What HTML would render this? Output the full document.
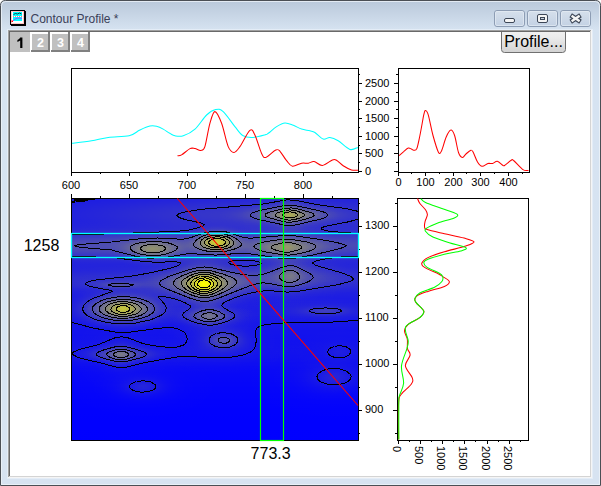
<!DOCTYPE html>
<html><head><meta charset="utf-8"><style>
html,body{margin:0;padding:0;background:#fff;width:601px;height:486px;overflow:hidden}
svg{display:block}
</style></head><body>
<svg width="601" height="486" viewBox="0 0 601 486">

<defs>
 <linearGradient id="frameg" gradientUnits="userSpaceOnUse" x1="0" y1="0" x2="0" y2="486">
  <stop offset="0" stop-color="#b9c8da"/>
  <stop offset="0.062" stop-color="#d6e3f1"/>
  <stop offset="1" stop-color="#d7e3f1"/>
 </linearGradient>
 <linearGradient id="btng" x1="0" y1="0" x2="0" y2="1">
  <stop offset="0" stop-color="#d6e0ec"/>
  <stop offset="1" stop-color="#c3d1e3"/>
 </linearGradient>
 <linearGradient id="profg" x1="0" y1="0" x2="0" y2="1">
  <stop offset="0" stop-color="#f6f6f6"/>
  <stop offset="0.45" stop-color="#ebebeb"/>
  <stop offset="1" stop-color="#d2d2d2"/>
 </linearGradient>
 <clipPath id="clientclip"><rect x="10" y="32" width="580" height="444"/></clipPath>
 <clipPath id="mpclip"><rect x="72" y="199" width="286" height="241"/></clipPath>
</defs>
<path d="M0.5 485.5 V5.5 Q0.5 0.5 5.5 0.5 H595.5 Q600.5 0.5 600.5 5.5 V485.5 Z" fill="url(#frameg)" stroke="#4b4f55" stroke-width="1"/>
<path d="M1.5 484.5 V5.5 Q1.5 1.5 5.5 1.5 H595.5 Q599.5 1.5 599.5 5.5 V484.5 Z" fill="none" stroke="#eef3f9" stroke-opacity="0.8" stroke-width="1"/>
<rect x="7" y="29" width="586" height="450" fill="#e4edf7"/>
<rect x="8" y="30" width="584" height="448" fill="#f5f5f5"/>
<rect x="8" y="30" width="583" height="447" fill="#a0a0a0"/>
<rect x="9" y="31" width="582" height="446" fill="#d4d4d4"/>
<rect x="9" y="31" width="581" height="445" fill="#696969"/>
<rect x="10" y="32" width="580" height="444" fill="#ffffff"/>


<g>
 <rect x="11" y="11" width="15" height="15" fill="#000"/>
 <rect x="10" y="10" width="15" height="15" fill="#000"/>
 <rect x="11" y="11" width="13" height="13" fill="#fff"/>
 <rect x="11.5" y="11.5" width="12" height="12" fill="none" stroke="#ff7070" stroke-width="0.8" stroke-dasharray="1 1"/>
 <rect x="13" y="12" width="9" height="4" fill="#00ffff"/>
 <rect x="13" y="17" width="9" height="4" fill="#00ffff"/>
 <path d="M13.5 14.5 l2 -1 l2 0.5 l2 -1 l2 1" stroke="#103030" stroke-width="0.9" fill="none"/>
 <path d="M13 21 l2 -2 l3 -1 l4 0.5" stroke="#a040ff" stroke-width="0.9" fill="none"/>
 <path d="M13 16.5 h9" stroke="#ff4040" stroke-width="0.7" stroke-dasharray="1 1"/>
 <rect x="11.5" y="20.5" width="1.5" height="1.5" fill="#ff0000"/>
</g>

<text x="30.5" y="23" font-family="'Liberation Sans', sans-serif" font-size="12" fill="#3a4058">Contour Profile *</text>
<rect x="494.5" y="10.5" width="30" height="16" rx="2.5" ry="2.5" fill="url(#btng)" stroke="#8d9db4" stroke-width="1"/><rect x="495.5" y="11.5" width="28" height="14" rx="1.5" fill="none" stroke="#e4ebf4" stroke-opacity="0.7"/>
<rect x="527.5" y="10.5" width="30" height="16" rx="2.5" ry="2.5" fill="url(#btng)" stroke="#8d9db4" stroke-width="1"/><rect x="528.5" y="11.5" width="28" height="14" rx="1.5" fill="none" stroke="#e4ebf4" stroke-opacity="0.7"/>
<rect x="560.5" y="10.5" width="30" height="16" rx="2.5" ry="2.5" fill="url(#btng)" stroke="#8d9db4" stroke-width="1"/><rect x="561.5" y="11.5" width="28" height="14" rx="1.5" fill="none" stroke="#e4ebf4" stroke-opacity="0.7"/>
<rect x="504.5" y="18.5" width="10" height="4" rx="1.5" fill="#f4f4f4" stroke="#3c4656" stroke-width="1"/>
<rect x="537.5" y="14.5" width="10" height="8" rx="1.5" fill="#f4f4f4" stroke="#3c4656" stroke-width="1"/><rect x="540.5" y="17.5" width="4" height="2" fill="#c8d0dc" stroke="#3c4656" stroke-width="1"/>
<path d="M572.6 16.5 L578.6 20.5 M578.6 16.5 L572.6 20.5" stroke="#3c4656" stroke-width="4.6" stroke-linecap="square"/><path d="M572.6 16.5 L578.6 20.5 M578.6 16.5 L572.6 20.5" stroke="#f4f4f4" stroke-width="2.4" stroke-linecap="square"/>
<rect x="10" y="32" width="20" height="20" fill="#c0c0c0"/>
<path d="M20.2 37.6 H22.4 V47.9 H20.2 V40.6 Q19 41.6 17.4 42 V39.9 Q19.4 39.2 20.2 37.6 Z" fill="#000"/>
<rect x="31" y="32" width="19" height="20" fill="#808080"/><rect x="31" y="32" width="17" height="18" fill="#ffffff"/><rect x="32" y="34" width="16" height="16" fill="#c0c0c0"/>
<text x="40.5" y="47" text-anchor="middle" font-family="'Liberation Sans', sans-serif" font-weight="bold" font-size="12.5" fill="#ffffff">2</text>
<rect x="51" y="32" width="19" height="20" fill="#808080"/><rect x="51" y="32" width="17" height="18" fill="#ffffff"/><rect x="52" y="34" width="16" height="16" fill="#c0c0c0"/>
<text x="60.5" y="47" text-anchor="middle" font-family="'Liberation Sans', sans-serif" font-weight="bold" font-size="12.5" fill="#ffffff">3</text>
<rect x="71" y="32" width="19" height="20" fill="#808080"/><rect x="71" y="32" width="17" height="18" fill="#ffffff"/><rect x="72" y="34" width="16" height="16" fill="#c0c0c0"/>
<text x="80.5" y="47" text-anchor="middle" font-family="'Liberation Sans', sans-serif" font-weight="bold" font-size="12.5" fill="#ffffff">4</text>
<g clip-path="url(#clientclip)"><rect x="501.5" y="25.5" width="64" height="27" rx="3" ry="3" fill="url(#profg)" stroke="#707070" stroke-width="1"/>
<text x="533.5" y="46.5" text-anchor="middle" font-family="'Liberation Sans', sans-serif" font-size="16" fill="#000">Profile...</text></g>
<text x="71.0" y="189" font-family="'Liberation Sans', sans-serif" font-size="11" text-anchor="middle" >600</text>
<text x="129.0" y="189" font-family="'Liberation Sans', sans-serif" font-size="11" text-anchor="middle" >650</text>
<text x="187.0" y="189" font-family="'Liberation Sans', sans-serif" font-size="11" text-anchor="middle" >700</text>
<text x="245.0" y="189" font-family="'Liberation Sans', sans-serif" font-size="11" text-anchor="middle" >750</text>
<text x="303.0" y="189" font-family="'Liberation Sans', sans-serif" font-size="11" text-anchor="middle" >800</text>
<text x="365" y="174.5" font-family="'Liberation Sans', sans-serif" font-size="11" text-anchor="start" >0</text>
<text x="365" y="156.5" font-family="'Liberation Sans', sans-serif" font-size="11" text-anchor="start" >500</text>
<text x="365" y="139.5" font-family="'Liberation Sans', sans-serif" font-size="11" text-anchor="start" >1000</text>
<text x="365" y="121.5" font-family="'Liberation Sans', sans-serif" font-size="11" text-anchor="start" >1500</text>
<text x="365" y="104.5" font-family="'Liberation Sans', sans-serif" font-size="11" text-anchor="start" >2000</text>
<text x="365" y="86.5" font-family="'Liberation Sans', sans-serif" font-size="11" text-anchor="start" >2500</text>
<text x="398.5" y="186" font-family="'Liberation Sans', sans-serif" font-size="11" text-anchor="middle" >0</text>
<text x="425.5" y="186" font-family="'Liberation Sans', sans-serif" font-size="11" text-anchor="middle" >100</text>
<text x="453.5" y="186" font-family="'Liberation Sans', sans-serif" font-size="11" text-anchor="middle" >200</text>
<text x="480.5" y="186" font-family="'Liberation Sans', sans-serif" font-size="11" text-anchor="middle" >300</text>
<text x="508.5" y="186" font-family="'Liberation Sans', sans-serif" font-size="11" text-anchor="middle" >400</text>
<text x="365" y="413.3" font-family="'Liberation Sans', sans-serif" font-size="11" text-anchor="start" >900</text>
<text x="365" y="367.3" font-family="'Liberation Sans', sans-serif" font-size="11" text-anchor="start" >1000</text>
<text x="365" y="321.3" font-family="'Liberation Sans', sans-serif" font-size="11" text-anchor="start" >1100</text>
<text x="365" y="275.3" font-family="'Liberation Sans', sans-serif" font-size="11" text-anchor="start" >1200</text>
<text x="365" y="229.3" font-family="'Liberation Sans', sans-serif" font-size="11" text-anchor="start" >1300</text>
<text transform="translate(393.0,446) rotate(90)" font-family="'Liberation Sans', sans-serif" font-size="11">0</text>
<text transform="translate(415.0,446) rotate(90)" font-family="'Liberation Sans', sans-serif" font-size="11">500</text>
<text transform="translate(437.0,446) rotate(90)" font-family="'Liberation Sans', sans-serif" font-size="11">1000</text>
<text transform="translate(459.0,446) rotate(90)" font-family="'Liberation Sans', sans-serif" font-size="11">1500</text>
<text transform="translate(482.0,446) rotate(90)" font-family="'Liberation Sans', sans-serif" font-size="11">2000</text>
<text transform="translate(504.0,446) rotate(90)" font-family="'Liberation Sans', sans-serif" font-size="11">2500</text>
<path d="M71.5 172 v4 M71.5 198 v-4 M100.5 172 v2 M100.5 198 v-2 M129.5 172 v4 M129.5 198 v-4 M158.5 172 v2 M158.5 198 v-2 M187.5 172 v4 M187.5 198 v-4 M216.5 172 v2 M216.5 198 v-2 M245.5 172 v4 M245.5 198 v-4 M274.5 172 v2 M274.5 198 v-2 M303.5 172 v4 M303.5 198 v-4 M332.5 172 v2 M332.5 198 v-2 M358 171.5 h4 M398 171.5 h-4 M358 162.5 h2 M398 162.5 h-2 M358 153.5 h4 M398 153.5 h-4 M358 145.5 h2 M398 145.5 h-2 M358 136.5 h4 M398 136.5 h-4 M358 127.5 h2 M398 127.5 h-2 M358 118.5 h4 M398 118.5 h-4 M358 109.5 h2 M398 109.5 h-2 M358 101.5 h4 M398 101.5 h-4 M358 92.5 h2 M398 92.5 h-2 M358 83.5 h4 M398 83.5 h-4 M358 74.5 h2 M398 74.5 h-2 M398.5 172 v4 M411.5 172 v2 M425.5 172 v4 M439.5 172 v2 M453.5 172 v4 M466.5 172 v2 M480.5 172 v4 M494.5 172 v2 M508.5 172 v4 M522.5 172 v2 M358 433.5 h2 M397 433.5 h-2 M358 410.5 h4 M397 410.5 h-4 M358 387.5 h2 M397 387.5 h-2 M358 364.5 h4 M397 364.5 h-4 M358 341.5 h2 M397 341.5 h-2 M358 318.5 h4 M397 318.5 h-4 M358 295.5 h2 M397 295.5 h-2 M358 272.5 h4 M397 272.5 h-4 M358 249.5 h2 M397 249.5 h-2 M358 226.5 h4 M397 226.5 h-4 M358 203.5 h2 M397 203.5 h-2 M398.5 440 v4 M409.5 440 v2 M420.5 440 v4 M431.5 440 v2 M442.5 440 v4 M453.5 440 v2 M464.5 440 v4 M475.5 440 v2 M487.5 440 v4 M498.5 440 v2 M509.5 440 v4 M520.5 440 v2" stroke="#000" stroke-width="1" fill="none"/>
<defs><radialGradient id="lor"><stop offset="0.0000" stop-color="#fff" stop-opacity="1.0000"/><stop offset="0.0417" stop-color="#fff" stop-opacity="0.9503"/><stop offset="0.0833" stop-color="#fff" stop-opacity="0.8220"/><stop offset="0.1250" stop-color="#fff" stop-opacity="0.6603"/><stop offset="0.1667" stop-color="#fff" stop-opacity="0.5046"/><stop offset="0.2083" stop-color="#fff" stop-opacity="0.3750"/><stop offset="0.2500" stop-color="#fff" stop-opacity="0.2754"/><stop offset="0.2917" stop-color="#fff" stop-opacity="0.2023"/><stop offset="0.3333" stop-color="#fff" stop-opacity="0.1495"/><stop offset="0.3750" stop-color="#fff" stop-opacity="0.1115"/><stop offset="0.4167" stop-color="#fff" stop-opacity="0.0842"/><stop offset="0.4583" stop-color="#fff" stop-opacity="0.0644"/><stop offset="0.5000" stop-color="#fff" stop-opacity="0.0498"/><stop offset="0.5417" stop-color="#fff" stop-opacity="0.0389"/><stop offset="0.5833" stop-color="#fff" stop-opacity="0.0307"/><stop offset="0.6250" stop-color="#fff" stop-opacity="0.0243"/><stop offset="0.6667" stop-color="#fff" stop-opacity="0.0194"/><stop offset="0.7083" stop-color="#fff" stop-opacity="0.0154"/><stop offset="0.7500" stop-color="#fff" stop-opacity="0.0122"/><stop offset="0.7917" stop-color="#fff" stop-opacity="0.0095"/><stop offset="0.8333" stop-color="#fff" stop-opacity="0.0072"/><stop offset="0.8750" stop-color="#fff" stop-opacity="0.0052"/><stop offset="0.9167" stop-color="#fff" stop-opacity="0.0033"/><stop offset="0.9583" stop-color="#fff" stop-opacity="0.0016"/><stop offset="1.0000" stop-color="#fff" stop-opacity="0.0000"/></radialGradient><radialGradient id="gau"><stop offset="0.0000" stop-color="#fff" stop-opacity="1.0000"/><stop offset="0.0833" stop-color="#fff" stop-opacity="0.9692"/><stop offset="0.1667" stop-color="#fff" stop-opacity="0.8825"/><stop offset="0.2500" stop-color="#fff" stop-opacity="0.7548"/><stop offset="0.3333" stop-color="#fff" stop-opacity="0.6064"/><stop offset="0.4167" stop-color="#fff" stop-opacity="0.4575"/><stop offset="0.5000" stop-color="#fff" stop-opacity="0.3240"/><stop offset="0.5833" stop-color="#fff" stop-opacity="0.2150"/><stop offset="0.6667" stop-color="#fff" stop-opacity="0.1331"/><stop offset="0.7500" stop-color="#fff" stop-opacity="0.0760"/><stop offset="0.8333" stop-color="#fff" stop-opacity="0.0386"/><stop offset="0.9167" stop-color="#fff" stop-opacity="0.0150"/><stop offset="1.0000" stop-color="#fff" stop-opacity="0.0000"/></radialGradient><linearGradient id="bgg" x1="0" y1="0" x2="0" y2="1"><stop offset="0.0000" stop-color="#fff" stop-opacity="0.0955"/><stop offset="0.0312" stop-color="#fff" stop-opacity="0.0955"/><stop offset="0.0625" stop-color="#fff" stop-opacity="0.0955"/><stop offset="0.0938" stop-color="#fff" stop-opacity="0.0954"/><stop offset="0.1250" stop-color="#fff" stop-opacity="0.0954"/><stop offset="0.1562" stop-color="#fff" stop-opacity="0.0953"/><stop offset="0.1875" stop-color="#fff" stop-opacity="0.0951"/><stop offset="0.2188" stop-color="#fff" stop-opacity="0.0949"/><stop offset="0.2500" stop-color="#fff" stop-opacity="0.0947"/><stop offset="0.2812" stop-color="#fff" stop-opacity="0.0943"/><stop offset="0.3125" stop-color="#fff" stop-opacity="0.0938"/><stop offset="0.3438" stop-color="#fff" stop-opacity="0.0930"/><stop offset="0.3750" stop-color="#fff" stop-opacity="0.0920"/><stop offset="0.4062" stop-color="#fff" stop-opacity="0.0906"/><stop offset="0.4375" stop-color="#fff" stop-opacity="0.0887"/><stop offset="0.4688" stop-color="#fff" stop-opacity="0.0861"/><stop offset="0.5000" stop-color="#fff" stop-opacity="0.0827"/><stop offset="0.5312" stop-color="#fff" stop-opacity="0.0784"/><stop offset="0.5625" stop-color="#fff" stop-opacity="0.0729"/><stop offset="0.5938" stop-color="#fff" stop-opacity="0.0664"/><stop offset="0.6250" stop-color="#fff" stop-opacity="0.0590"/><stop offset="0.6562" stop-color="#fff" stop-opacity="0.0509"/><stop offset="0.6875" stop-color="#fff" stop-opacity="0.0427"/><stop offset="0.7188" stop-color="#fff" stop-opacity="0.0347"/><stop offset="0.7500" stop-color="#fff" stop-opacity="0.0275"/><stop offset="0.7812" stop-color="#fff" stop-opacity="0.0212"/><stop offset="0.8125" stop-color="#fff" stop-opacity="0.0161"/><stop offset="0.8438" stop-color="#fff" stop-opacity="0.0120"/><stop offset="0.8750" stop-color="#fff" stop-opacity="0.0088"/><stop offset="0.9062" stop-color="#fff" stop-opacity="0.0064"/><stop offset="0.9375" stop-color="#fff" stop-opacity="0.0046"/><stop offset="0.9688" stop-color="#fff" stop-opacity="0.0033"/><stop offset="1.0000" stop-color="#fff" stop-opacity="0.0024"/></linearGradient><filter id="cmap" filterUnits="userSpaceOnUse" x="72" y="199" width="286" height="241" color-interpolation-filters="sRGB"><feColorMatrix type="matrix" values="1 0 0 0 0  1 0 0 0 0  -1 0 0 0 1  0 0 0 0 1"/></filter></defs>
<g clip-path="url(#mpclip)"><g filter="url(#cmap)" style="isolation:isolate">
<rect x="72" y="199" width="286" height="241" fill="#000"/>
<rect x="72" y="199" width="286" height="241" fill="url(#bgg)" style="mix-blend-mode:plus-lighter"/>
<ellipse cx="270" cy="215" rx="394.8" ry="36.2" fill="url(#gau)" fill-opacity="0.131" style="mix-blend-mode:plus-lighter"/>
<ellipse cx="200" cy="246" rx="750.0" ry="26.7" fill="url(#gau)" fill-opacity="0.230" style="mix-blend-mode:plus-lighter"/>
<ellipse cx="220" cy="280" rx="580.4" ry="28.4" fill="url(#gau)" fill-opacity="0.111" style="mix-blend-mode:plus-lighter"/>
<ellipse cx="190" cy="311" rx="469.2" ry="27.3" fill="url(#gau)" fill-opacity="0.025" style="mix-blend-mode:plus-lighter"/>
<ellipse cx="140" cy="354" rx="289.8" ry="22.3" fill="url(#gau)" fill-opacity="0.043" style="mix-blend-mode:plus-lighter"/>
<ellipse cx="204" cy="284.4" rx="82.5" ry="24.0" fill="url(#gau)" fill-opacity="0.281" style="mix-blend-mode:plus-lighter"/>
<ellipse cx="217" cy="241.6" rx="34.7" ry="17.2" fill="url(#gau)" fill-opacity="0.491" style="mix-blend-mode:plus-lighter"/>
<ellipse cx="123" cy="309" rx="64.2" ry="24.0" fill="url(#gau)" fill-opacity="0.528" style="mix-blend-mode:plus-lighter"/>
<ellipse cx="290" cy="215" rx="73.0" ry="13.2" fill="url(#gau)" fill-opacity="0.263" style="mix-blend-mode:plus-lighter"/>
<ellipse cx="287" cy="248" rx="64.0" ry="19.5" fill="url(#gau)" fill-opacity="0.223" style="mix-blend-mode:plus-lighter"/>
<ellipse cx="152.5" cy="250" rx="46.0" ry="18.1" fill="url(#gau)" fill-opacity="0.264" style="mix-blend-mode:plus-lighter"/>
<ellipse cx="290" cy="275.5" rx="100.0" ry="24.0" fill="url(#gau)" fill-opacity="0.115" style="mix-blend-mode:plus-lighter"/>
<ellipse cx="121" cy="354.6" rx="58.4" ry="11.7" fill="url(#gau)" fill-opacity="0.200" style="mix-blend-mode:plus-lighter"/>
<ellipse cx="209.5" cy="316.3" rx="48.7" ry="13.0" fill="url(#gau)" fill-opacity="0.219" style="mix-blend-mode:plus-lighter"/>
<ellipse cx="204" cy="284.4" rx="76.2" ry="64.1" fill="url(#lor)" fill-opacity="0.521" style="mix-blend-mode:plus-lighter"/>
<ellipse cx="123" cy="309" rx="48.6" ry="32.8" fill="url(#lor)" fill-opacity="0.144" style="mix-blend-mode:plus-lighter"/>
<ellipse cx="290" cy="215" rx="61.3" ry="57.2" fill="url(#lor)" fill-opacity="0.186" style="mix-blend-mode:plus-lighter"/>
<ellipse cx="287" cy="248" rx="26.1" ry="35.8" fill="url(#lor)" fill-opacity="0.049" style="mix-blend-mode:plus-lighter"/>
<ellipse cx="290" cy="275.5" rx="63.5" ry="60.9" fill="url(#lor)" fill-opacity="0.178" style="mix-blend-mode:plus-lighter"/>
<ellipse cx="121" cy="354.6" rx="59.3" ry="48.0" fill="url(#lor)" fill-opacity="0.185" style="mix-blend-mode:plus-lighter"/>
<ellipse cx="209.5" cy="316.3" rx="59.2" ry="54.7" fill="url(#lor)" fill-opacity="0.105" style="mix-blend-mode:plus-lighter"/>
<ellipse cx="224" cy="340.4" rx="80.2" ry="40.0" fill="url(#lor)" fill-opacity="0.254" style="mix-blend-mode:plus-lighter"/>
<ellipse cx="143" cy="387" rx="98.5" ry="41.7" fill="url(#lor)" fill-opacity="0.121" style="mix-blend-mode:plus-lighter"/>
<ellipse cx="334" cy="378" rx="120.0" ry="55.1" fill="url(#lor)" fill-opacity="0.116" style="mix-blend-mode:plus-lighter"/>
<ellipse cx="326" cy="311" rx="118.6" ry="22.2" fill="url(#lor)" fill-opacity="0.150" style="mix-blend-mode:plus-lighter"/>
<ellipse cx="119" cy="285" rx="103.3" ry="14.3" fill="url(#lor)" fill-opacity="0.161" style="mix-blend-mode:plus-lighter"/>
<ellipse cx="340" cy="352" rx="76.7" ry="38.9" fill="url(#lor)" fill-opacity="0.056" style="mix-blend-mode:plus-lighter"/>
</g>
<path d="M359.5 320.2l-28 1.9l-52 1.0l-14.4 1.5l-5.6 1.7l-3 2.3l-0.8 3.0l0.5 10.0l-1.3 6.0l-1.2 2.0l-2.2 2.0l-7 3.1l-10 2.1l-12 1.0l-12 -0.1l-23 -1.2l-10 0.4l-33.1 5.7l-16.9 4.4l-6 0.6l-7 -0.8l-10.8 -3.1l-25.2 -6.0l-5.5 -3.0l-0.4 -1.0l0.3 -1.0l1.1 -1.0l6.5 -2.6l17.6 -4.4l16.4 -6.7l6 -1.1l4 0.2l4 0.9l14.9 5.7l9.1 1.9l15 1.7l10 -0.3l6 -2.0l1.7 -1.3l1.4 -2.0l0.5 -2.0l-0.2 -3.0l-1.3 -3.0l-1.9 -2.0l-6.3 -3.0l-5 -0.9l-5 -0.2l-10 0.8l-30 4.1l-9 0.1l-25 -4.5l-23 -6.1M334.5 346.3l6 -0.6l6 1.2l3.8 2.6l0.7 3.0l-2.5 3.0l-5 2.0l-6 0.4l-5 -1.1l-3.8 -2.3l-1.2 -3.0l2 -3.0l4.9 -2.2M331.5 368.5l8 0.3l7 2.4l3.9 3.3l0.7 2.0l-0.3 2.0l-1.4 2.0l-3 2.0l-7.8 2.2l-9 0.0l-8 -2.3l-2.9 -1.9l-1.4 -2.0l-0.3 -2.0l0.7 -2.0l1.9 -2.0l3 -1.8l4 -1.4l5 -0.8M136.5 381.4l7 -0.6l7 1.1l4.7 2.6l0.7 1.0l0 2.0l-2.4 2.4l-5 1.8l-7 0.5l-6 -0.9l-3.9 -1.7l-1.2 -1.0l-0.9 -2.0l0.7 -2.0l1.1 -1.0l5.2 -2.1M359.5 218.9l-11 2.9l-23.6 4.7l-2.7 1.0l-1 1.0l0.9 1.0l3.1 1.0l6 1.0l28.4 2.2M70.5 235.0l50.2 -1.5l53.8 -2.1l12.1 -0.9l12.5 -3.0l4.8 -2.0l0.5 -1.0l-2.9 -1.4l-16.6 -3.6l-6 -2.0l-2.1 -2.0l0.5 -1.0l4.5 -2.0l18.7 -3.1l62 -5.3l24 -4.2l9 0.3l19 4.0l32 4.5l13 3.0M359.5 256.1l-18 0.9l-14 1.5l-10.4 2.0l-4.1 2.0l-0.1 1.0l3 2.0l24.8 7.0l10.4 4.0l2.1 2.0l-0.1 1.0l-2.9 2.0l-11.6 3.0l-43 7.2l-8 0.4l-16 -1.3l-9 0.2l-10 1.5l-14.6 4.0l-12.2 5.0l-2.9 2.0l-1.1 2.0l1.4 2.0l10.4 6.0l1.1 2.0l-0.7 2.0l-2.6 2.0l-6 2.5l-10 2.8l-5 0.5l-5 -0.4l-8 -1.9l-7 -2.2l-5 -2.3l-2.3 -2.0l-0.4 -2.0l1.4 -2.0l5.8 -4.0l0.9 -2.0l-0.7 -1.0l-5.5 -3.0l-8 -3.0l-7.3 -2.0l-8 -1.3l-2.7 0.3l0.2 1.0l6.1 7.0l1.2 3.0l-0.2 3.0l-2.2 3.0l-2.9 2.0l-10.5 4.4l-15 3.2l-16 0.7l-8 -0.7l-8 -1.4l-7 -1.9l-5.8 -2.3l-4.8 -3.0l-2.5 -3.0l-0.6 -3.0l1.8 -4.0l3.3 -3.0l5.6 -3.2l18.9 -6.8l-0.3 -1.0l-16.5 -2.9l-7 -1.8l-2.5 -1.3l-0.3 -1.0l1 -1.0l3.8 -1.4l6 -1.2l34 -3.6l21.7 -3.8l21 -5.0l5.2 -2.0l2.5 -2.0l-0.8 -1.0l-4.7 -0.7l-19 0.4l-11 -0.5l-33.2 -4.3l-41.8 -1.0M235.5 260.4l-5.6 1.1l-1.2 1.0l0.7 1.0l2.2 1.0l5.9 1.2l7 0.5l7 -0.3l7 -1.2l2.6 -1.3l-0.7 -1.0l-3.1 -1.0l-6.8 -1.0l-15 -0.1M316.5 308.4l9 -0.5l9 0.5l5 1.0l1.8 1.0l-0.1 1.0l-2.7 1.2l-7 1.0l-8 0.2l-7 -0.5l-4.9 -0.9l-2.2 -1.0l-0.2 -1.0l1.8 -1.0l5.5 -1.1M216.5 333.3l7 -0.7l8 1.4l3.1 1.5l2.4 2.0l1 2.0l-0.1 2.0l-2.4 3.1l-6 2.6l-7 0.6l-7.2 -1.3l-4.8 -3.0l-1.2 -2.0l-0.2 -2.0l0.8 -2.0l1.5 -1.7l5 -2.5M118.5 346.4l8 0.4l11 2.9l7.4 2.7l1.2 1.0l0.3 1.0l-1 1.3l-3.4 1.7l-17.6 4.5l-8 -0.2l-11 -2.8l-7.2 -2.6l-1.4 -1.0l-0.5 -1.0l0.3 -1.0l1.8 -1.3l4.2 -1.7l10.8 -3.1l5 -0.9M285.5 205.4l5 -0.3l4 0.4l24.1 5.0l6.4 2.0l1.7 1.0l0.9 1.0l0 1.0l-2.4 2.0l-4.7 1.6l-25 5.9l-5 0.6l-6 -0.5l-25.5 -5.6l-4.5 -1.3l-3.6 -1.7l-0.8 -1.0l0.1 -1.0l2.3 -1.8l7.2 -2.2l25.8 -5.1M211.5 231.4l7 -0.3l8 0.9l17 5.4l6 0.9l35 -2.8l10 0.3l26.8 3.8l15.7 3.0l7.5 2.0l1.5 1.0l-0.5 1.0l-5.6 2.0l-26.3 6.3l-23 4.1l-6 -0.1l-34 -5.0l-9 -0.7l-26 1.9l-27 -1.6l-25 4.2l-15 0.5l-13 -1.9l-24 -6.3l-29.5 -2.5l-6.6 -1.0l-0.7 -1.0l5 -1.0l31.8 -2.5l34 -3.8l12 -0.2l21 1.1l6 -0.1l6 -1.3l13 -4.7l8 -1.6M288.5 265.4l4 0.2l5 1.5l10.8 5.4l4.1 3.0l0.8 2.0l-0.4 1.0l-2.3 2.0l-4 2.0l-9.1 3.2l-8 1.1l-6 -0.5l-16 -3.2l-5 -0.2l-5 0.6l-8 2.4l-33 13.1l-8 2.2l-8 -0.1l-10 -2.7l-24.1 -9.7l-5.5 -3.0l-1.5 -2.0l0.1 -1.0l1.5 -2.0l7.1 -4.0l19.4 -6.6l11 -2.7l6 -0.4l6 0.5l27 6.1l10 1.4l7 0.3l5 -0.4l7 -1.5l16 -6.3l6 -1.5M113.5 283.5l11 -0.2l8.5 1.2l-0.6 1.0l-3.9 0.7l-12 0.4l-7.9 -1.1l-0.4 -1.0l5.3 -1.0M113.5 297.4l7 -0.7l8 0.1l8 1.1l6 1.5l6 2.4l4 2.7l2.1 3.0l-0.1 3.0l-2.4 3.0l-4.6 2.7l-6 2.1l-8 1.7l-8 0.7l-7 -0.1l-7 -0.8l-8 -1.9l-5.7 -2.3l-4.1 -3.0l-1.5 -3.0l0.7 -3.0l2.9 -3.0l4.7 -2.6l6 -2.1l7 -1.5M207.5 309.5l6 0.5l6 1.9l4.6 2.7l0.6 2.0l-1.2 1.5l-2.7 1.5l-8.3 2.2l-7 -0.2l-7.2 -2.0l-3.6 -2.0l-0.8 -1.0l0.4 -2.0l5.2 -3.1l8 -2.0M222.5 337.4l3.4 0.1l2.7 1.0l1 1.0l-0.2 2.0l-1.9 1.3l-3 0.6l-5 -0.9l-1.2 -1.0l-0.2 -2.0l1.5 -1.3l3 -0.9M117.5 349.4l5 -0.2l6 1.1l5.7 2.2l1.7 2.0l-0.5 1.0l-1.9 1.3l-8 2.6l-5 0.4l-6 -0.9l-6.3 -2.4l-1.8 -2.0l0.4 -1.0l3.3 -2.0l7.3 -2.1M284.5 208.4l7 -0.5l7 1.2l12.4 3.4l2.6 1.5l0.6 1.5l-1.6 1.3l-4.4 1.7l-13.6 3.4l-7 0.3l-7 -1.3l-12.3 -3.4l-2.7 -1.5l-0.4 -1.5l1.1 -1.0l4.3 -1.7l14 -3.4M214.5 233.4l9 0.4l8.6 2.6l3.6 2.0l3.8 3.0l1.6 2.0l0.2 2.0l-2.6 2.0l-5.2 2.0l-6 1.5l-7 0.9l-12 -0.4l-6 -1.2l-4.8 -1.7l-2.2 -1.2l-1.8 -1.8l-0 -2.0l2.2 -3.0l4.2 -3.0l4.4 -2.0l5.1 -1.4l5 -0.6M282.5 239.5l9 0.0l15 2.3l7.8 2.7l1.2 1.0l0.3 2.0l-2.3 2.0l-6.1 2.3l-8 1.8l-10 1.5l-7 -0.3l-17 -2.9l-5.2 -1.5l-4.6 -2.0l-1.8 -2.0l0.5 -1.0l4.1 -2.0l6 -1.6l18 -2.5M149.5 241.5l10 0.2l9 1.3l7 2.4l1.6 1.2l0.4 1.0l-1.1 2.0l-3 2.0l-9.8 3.2l-11 1.0l-10.7 -1.2l-6.4 -2.0l-3.6 -2.0l-1.7 -2.0l0.3 -2.0l2.9 -2.0l4.1 -1.4l12 -1.7M199.5 270.4l5 -0.3l6 0.5l13 3.6l8.5 3.3l3.3 2.0l1.5 2.0l-0.3 2.0l-2.8 3.0l-4.8 3.0l-9.4 4.5l-7 2.5l-5 1.0l-5 0.1l-5 -0.7l-5 -1.5l-7.2 -3.0l-7.5 -4.0l-3.7 -3.0l-0.8 -3.0l2.3 -3.0l5.9 -3.4l10 -3.9l8 -1.8M287.5 270.3l5 0.1l4.6 2.1l2.5 3.0l-0.3 3.0l-2.7 2.4l-5 1.6l-5 -0.2l-4.5 -1.8l-2.1 -2.0l-0.4 -1.0l0.2 -2.0l2.8 -3.0l5 -2.2M119.5 299.5l11 0.4l10 2.6l4 2.1l2.1 2.0l0.9 2.0l-0.3 2.0l-1.6 2.0l-4.1 2.4l-5 1.7l-7 1.3l-12 0.1l-6 -1.0l-5.2 -1.6l-4 -2.0l-2.3 -2.0l-0.9 -2.0l0.9 -3.0l2.6 -2.2l5 -2.4l6 -1.6l6 -0.8M205.5 313.2l4 -0.5l4 0.6l2.6 1.2l0.9 1.0l0 1.0l-2.6 1.9l-3 0.7l-3 0.1l-3.7 -0.7l-2.1 -1.0l-0.9 -1.0l-0 -1.0l0.8 -1.0l2.9 -1.3M118.5 351.5l4 -0.1l3 0.6l2.9 1.5l0.5 1.0l-1.4 1.6l-3 1.2l-4 0.4l-3 -0.4l-3 -1.2l-1.3 -1.6l0.5 -1.0l1.5 -1.0l3.3 -1.0M285.5 210.3l5 -0.4l6 0.9l6.9 2.7l1 1.0l0 1.0l-2.8 2.0l-8.1 2.4l-5 0.2l-6 -1.1l-6.4 -2.5l-1 -1.0l0 -1.0l3 -2.0l7.3 -2.2M212.5 235.4l8 -0.1l7 1.7l2.9 1.5l2.3 2.0l1 2.0l-0.3 2.0l-1.9 2.0l-2.1 1.1l-8 2.0l-9 0.0l-8 -2.0l-2.1 -1.2l-1.8 -2.0l0.1 -3.0l1.6 -2.0l3.1 -2.0l7.1 -2.1M284.5 242.5l5 0.0l8 1.8l2.9 1.2l1.1 1.0l0.2 1.0l-0.8 1.0l-2.4 1.3l-10 2.6l-4 -0.1l-7.4 -1.7l-5.1 -2.0l-0.9 -1.0l0.1 -1.0l3.6 -2.0l9.6 -2.0M152.5 244.5l5 0.3l5 1.1l2.8 1.6l0.4 1.0l-0.3 1.0l-3 2.0l-6.9 1.4l-7 -0.2l-5.1 -1.3l-2.9 -2.0l-0.3 -1.0l1.3 -1.7l4 -1.5l7 -0.8M201.5 272.5l9 0.5l10 3.4l3.7 2.1l2.3 2.0l1 2.0l-0.3 2.0l-2.5 3.0l-4.3 3.0l-5.9 2.9l-5 1.5l-4 0.5l-5 -0.2l-9 -2.8l-5.3 -2.9l-3.6 -3.0l-1.4 -3.0l0.6 -2.0l3 -3.0l5.4 -3.0l6.2 -2.2l5 -0.8M122.5 301.5l8 0.7l6.8 2.3l3.6 3.0l0.3 2.0l-0.4 1.0l-2 2.0l-3.3 1.7l-9 2.1l-9 -0.3l-8.3 -2.5l-3.7 -3.0l-0.4 -2.0l1.1 -2.0l2.8 -2.0l3.4 -1.4l5 -1.2l5 -0.4M286.5 212.3l4 -0.4l3.5 0.5l2.4 1.0l1.1 1.0l0 1.0l-2 1.5l-3 0.9l-3 0.2l-3.8 -0.6l-2.3 -1.0l-1 -1.0l0 -1.0l1.1 -1.0l3.1 -1.2M211.5 237.3l7 -0.6l6 1.2l4.1 2.6l0.6 1.0l0.1 2.0l-2.8 2.7l-5 1.5l-6 0.3l-6 -1.0l-4 -2.2l-1 -2.3l0.9 -2.0l1.1 -1.0l5 -2.2M201.5 274.4l8 0.4l7.1 2.6l2.9 2.0l1.7 2.0l0.5 2.0l-0.6 2.0l-2.7 3.0l-3 2.0l-3.9 1.8l-4 1.0l-4 0.3l-4 -0.5l-6.8 -2.6l-3 -2.0l-2.6 -3.0l-0.5 -2.0l0.6 -2.0l1.7 -2.0l3.5 -2.4l4 -1.7l5 -1.1M122.5 303.5l5 0.4l4.9 1.6l2.5 2.0l0.4 2.0l-0.5 1.0l-3.4 2.4l-6 1.5l-6 -0.1l-5.7 -1.7l-1.6 -1.0l-1.4 -2.0l0.7 -2.2l2.3 -1.8l2.4 -1.0l6.3 -1.0M215.5 238.4l4 0.1l3.4 1.0l2.4 2.0l-0.2 2.0l-2.6 1.8l-4 0.9l-4 -0.1l-4 -1.2l-1.6 -1.3l-0.1 -2.0l2.4 -2.0l4.4 -1.1M200.5 276.4l7 -0.0l6 2.1l3.4 3.0l0.6 2.0l-0.4 2.0l-1.5 2.0l-2.7 2.0l-5.4 2.0l-6 0.2l-6 -2.0l-3.8 -3.1l-0.9 -2.0l0.1 -2.0l1.2 -2.0l2.3 -1.8l6 -2.3M118.5 306.4l4 -0.9l4 0.5l2.8 1.5l0.6 2.0l-1.4 1.6l-3 1.1l-3 0.2l-3 -0.5l-2.7 -1.4l-0.6 -1.0l0.6 -2.0l1.7 -1.1M200.5 278.3l5 -0.4l5.3 1.6l2.9 3.0l-0.2 3.0l-3 3.0l-4 1.4l-5 -0.0l-3.8 -1.4l-3.1 -3.0l-0.1 -3.0l2 -2.4l4 -1.8M200.5 280.5l4 -0.7l3.1 0.7l2.5 2.0l0.4 1.0l-0.5 2.0l-1.5 1.4l-3 1.1l-5 -0.6l-2.5 -2.0l-0.4 -2.0l1.3 -2.0l1.6 -1.0" fill="none" stroke="#000" stroke-width="1" shape-rendering="crispEdges"/>
</g>
<path d="M74 199h14v1.6h-3v0.9h-9v-0.9h-2z M72 200.5h2.5v2h-2.5z M88 199h7v1h-7z" fill="#000" shape-rendering="crispEdges"/>
<rect x="71.5" y="68.5" width="287" height="104" fill="none" stroke="#000" stroke-width="1"/>
<rect x="398.5" y="68.5" width="131" height="104" fill="none" stroke="#000" stroke-width="1"/>
<rect x="71.5" y="198.5" width="287" height="242" fill="none" stroke="#000" stroke-width="1"/>
<rect x="397.5" y="198.5" width="131" height="242" fill="none" stroke="#000" stroke-width="1"/>
<path d="M72.0 143.3 C75.3 142.9 85.5 141.8 91.6 140.8 C97.6 139.8 102.0 138.2 108.3 137.4 C114.5 136.6 123.8 137.0 129.1 135.8 C134.4 134.6 136.4 131.6 139.9 130.0 C143.4 128.4 147.1 126.7 149.9 126.1 C152.7 125.5 154.3 125.8 156.5 126.3 C158.7 126.8 161.0 127.9 163.2 129.1 C165.4 130.3 167.8 132.2 169.8 133.3 C171.8 134.4 172.8 135.4 175.0 135.8 C177.2 136.2 180.0 136.9 183.3 135.8 C186.6 134.7 191.1 132.6 195.0 129.1 C198.9 125.6 203.2 118.2 206.6 115.0 C210.0 111.8 212.9 110.2 215.7 109.6 C218.5 109.0 220.0 108.8 223.2 111.6 C226.4 114.4 231.6 122.6 234.9 126.6 C238.2 130.6 240.1 134.0 243.2 135.8 C246.2 137.6 249.6 137.6 253.2 137.4 C256.8 137.2 262.3 135.6 264.8 134.9 C267.3 134.2 266.3 134.7 268.3 133.3 C270.3 131.9 273.8 128.3 276.6 126.6 C279.4 124.9 282.2 123.2 285.0 123.0 C287.8 122.8 290.5 124.3 293.3 125.3 C296.1 126.3 298.8 128.2 301.6 129.1 C304.4 130.0 307.7 130.2 309.9 130.8 C312.1 131.4 312.7 131.1 314.9 132.5 C317.1 133.9 320.7 138.3 323.2 139.1 C325.7 139.9 327.4 137.2 329.9 137.5 C332.4 137.8 334.9 138.8 338.2 140.8 C341.5 142.8 346.6 148.3 349.9 149.4 C353.2 150.5 356.6 147.7 358.0 147.4" fill="none" stroke="#00ffff" stroke-width="1.05" stroke-linejoin="round"/>
<path d="M177.5 155.7 C178.2 155.6 179.5 156.1 181.6 154.9 C183.7 153.7 187.8 149.7 190.0 148.6 C192.2 147.5 193.2 148.3 195.0 148.6 C196.8 148.9 199.2 150.7 200.8 150.4 C202.5 150.1 203.4 151.1 204.9 146.6 C206.4 142.1 208.2 129.1 209.9 123.3 C211.6 117.5 213.0 111.6 214.9 111.6 C216.8 111.6 219.4 117.5 221.6 123.3 C223.8 129.1 226.1 141.8 228.2 146.6 C230.3 151.4 232.1 152.4 234.0 152.4 C235.9 152.4 237.2 150.3 239.9 146.6 C242.6 142.9 247.4 132.2 249.9 130.3 C252.4 128.4 253.0 131.2 254.9 135.0 C256.8 138.8 259.7 149.5 261.5 153.2 C263.3 156.9 263.4 157.9 265.8 157.4 C268.2 156.9 273.4 151.0 275.8 150.0 C278.2 149.0 278.2 149.5 280.0 151.3 C281.8 153.1 284.5 158.2 286.6 160.7 C288.7 163.2 289.9 165.8 292.4 166.2 C294.9 166.6 299.0 163.7 301.6 163.2 C304.2 162.7 306.2 163.5 308.3 163.2 C310.4 162.9 311.8 161.2 314.1 161.6 C316.5 162.0 319.3 165.7 322.4 165.4 C325.4 165.1 330.0 160.8 332.4 159.9 C334.8 159.0 334.7 159.2 336.5 160.2 C338.3 161.2 340.7 164.1 343.2 165.7 C345.7 167.3 349.0 169.2 351.5 169.9 C354.0 170.7 356.9 170.1 358.0 170.2" fill="none" stroke="#ff0000" stroke-width="1.05" stroke-linejoin="round"/>
<path d="M399.1 155.6 C399.9 154.9 402.2 152.9 403.7 151.7 C405.2 150.4 407.0 148.5 408.3 148.1 C409.6 147.7 410.5 148.8 411.4 149.1 C412.3 149.4 412.8 150.3 413.7 150.2 C414.6 150.1 415.8 151.0 416.8 148.6 C417.8 146.2 418.7 141.2 419.9 135.5 C421.1 129.8 422.9 118.9 423.8 114.7 C424.8 110.5 424.8 110.4 425.6 110.5 C426.4 110.6 427.2 111.2 428.4 115.4 C429.6 119.6 431.3 129.4 433.0 135.5 C434.7 141.6 437.0 149.6 438.4 152.2 C439.8 154.8 440.2 153.4 441.5 150.9 C442.8 148.4 444.6 140.5 446.2 137.0 C447.8 133.5 449.4 130.3 450.8 130.1 C452.2 129.8 453.3 131.8 454.6 135.5 C455.9 139.2 457.2 148.8 458.5 152.5 C459.8 156.2 461.1 157.2 462.4 157.4 C463.6 157.7 464.6 155.2 466.0 154.0 C467.4 152.8 469.4 150.8 470.5 150.4 C471.6 150.0 471.6 149.6 472.8 151.5 C474.0 153.4 475.9 159.5 477.5 162.0 C479.1 164.5 480.4 166.1 482.1 166.3 C483.8 166.6 486.1 164.0 487.9 163.5 C489.6 163.0 491.0 163.9 492.6 163.5 C494.2 163.1 495.6 160.9 497.3 161.2 C499.1 161.5 501.8 164.9 503.1 165.5 C504.5 166.1 504.0 165.8 505.4 164.9 C506.8 164.0 509.8 161.0 511.2 160.3 C512.6 159.6 511.7 158.9 513.6 160.5 C515.6 162.1 520.4 167.9 522.9 169.6 C525.4 171.3 527.6 170.3 528.5 170.5" fill="none" stroke="#ff0000" stroke-width="1.05" stroke-linejoin="round"/>
<path d="M417.5 198.6 C417.9 199.4 418.4 201.3 419.7 203.2 C421.0 205.1 424.2 207.9 425.5 209.8 C426.8 211.7 427.5 212.9 427.4 214.8 C427.3 216.7 425.6 219.2 425.1 221.3 C424.6 223.4 424.3 225.7 424.6 227.1 C424.9 228.5 423.8 228.5 427.1 229.6 C430.4 230.7 438.2 232.3 444.4 233.7 C450.6 235.1 459.2 236.7 464.1 238.1 C469.0 239.5 473.7 240.6 474.0 241.9 C474.3 243.2 470.7 244.3 465.8 246.0 C460.9 247.7 450.7 249.9 444.4 251.8 C438.1 253.7 431.7 255.7 427.9 257.6 C424.1 259.5 422.4 261.7 421.8 263.3 C421.2 264.9 421.8 265.6 424.6 267.4 C427.4 269.2 435.6 272.5 438.6 274.0 C441.6 275.5 440.9 275.4 442.7 276.6 C444.5 277.9 449.0 279.9 449.3 281.5 C449.6 283.1 448.0 284.9 444.4 286.5 C440.8 288.1 432.6 289.8 427.9 291.4 C423.2 293.0 418.4 294.5 416.4 296.3 C414.3 298.1 414.4 299.6 415.6 302.1 C416.8 304.6 423.1 308.6 423.8 311.2 C424.5 313.8 422.3 315.5 419.7 317.7 C417.1 319.9 410.7 322.1 408.2 324.3 C405.7 326.5 404.6 328.4 404.5 330.9 C404.4 333.4 406.8 336.2 407.3 339.1 C407.8 342.1 407.0 345.9 407.5 348.6 C408.0 351.3 410.5 352.2 410.1 355.1 C409.8 358.0 405.0 362.1 405.4 365.9 C405.8 369.7 411.3 374.7 412.3 377.8 C413.3 380.9 413.0 381.6 411.2 384.3 C409.4 387.0 403.6 390.9 401.5 394.0 C399.4 397.1 399.1 395.0 398.6 402.6 C398.1 410.2 398.6 433.4 398.6 439.5" fill="none" stroke="#ff0000" stroke-width="1.05" stroke-linejoin="round"/>
<path d="M420.8 198.6 C421.6 199.2 422.1 200.8 425.5 202.4 C428.9 204.0 435.9 206.3 441.1 208.2 C446.3 210.1 454.5 212.3 456.7 213.9 C458.9 215.5 457.4 216.5 454.3 218.0 C451.2 219.5 442.3 221.3 437.8 223.0 C433.3 224.7 429.2 226.5 427.1 227.9 C425.1 229.3 424.5 229.7 425.5 231.2 C426.5 232.7 428.9 235.1 432.9 237.0 C436.9 238.9 443.8 240.9 449.3 242.7 C454.8 244.5 463.9 246.3 465.8 247.7 C467.7 249.1 464.4 249.9 460.8 251.0 C457.2 252.1 449.9 252.9 444.4 254.3 C438.9 255.7 431.3 257.8 427.9 259.2 C424.5 260.6 423.9 261.1 423.8 262.5 C423.7 263.9 424.5 265.6 427.1 267.4 C429.7 269.2 436.8 271.7 439.4 273.2 C442.0 274.7 442.3 275.2 442.7 276.6 C443.1 278.0 443.3 279.7 441.9 281.5 C440.5 283.3 438.2 285.4 434.5 287.3 C430.8 289.2 423.0 291.1 419.7 293.0 C416.4 294.9 415.4 297.2 414.8 298.8 C414.2 300.4 414.9 300.8 416.4 302.9 C417.9 305.0 423.2 308.7 423.8 311.2 C424.4 313.7 422.7 315.1 419.7 317.7 C416.7 320.3 407.6 322.9 405.7 326.8 C403.8 330.7 408.0 337.2 408.2 340.8 C408.4 344.4 408.0 344.4 406.9 348.6 C405.8 352.8 402.1 360.1 401.5 365.9 C400.9 371.7 404.0 378.1 403.6 383.2 C403.2 388.2 400.1 392.9 399.3 396.2 C398.5 399.5 398.9 395.8 398.8 403.0 C398.7 410.2 398.8 433.4 398.8 439.5" fill="none" stroke="#00ff00" stroke-width="1.05" stroke-linejoin="round"/>
<rect x="71.5" y="233.5" width="287" height="24" fill="none" stroke="#00ffff" stroke-width="1.3"/>
<rect x="260.5" y="198.5" width="23" height="242" fill="none" stroke="#00ff00" stroke-width="1.2"/>
<line x1="177.3" y1="198.5" x2="358" y2="405.5" stroke="#ff0000" stroke-width="1.1"/>
<text x="23.7" y="251" font-family="'Liberation Sans', sans-serif" font-size="16" text-anchor="start" >1258</text>
<text x="250.6" y="458.5" font-family="'Liberation Sans', sans-serif" font-size="16" text-anchor="start" >773.3</text>
</svg></body></html>
